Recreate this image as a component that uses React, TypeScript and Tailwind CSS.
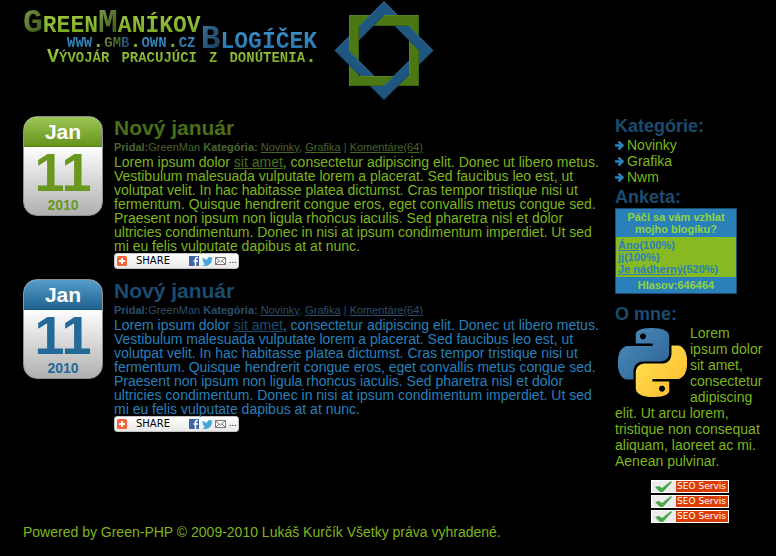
import React from "react";

type Tone = "green" | "blue";

const tones = {
  green: {
    head: "from-[#9cc653] to-[#66941c] border-[#55800f]",
    date: "text-[#6a981f]",
    title: "text-[#496f18]",
    meta: "text-[#48662a]",
    body: "text-[#7db61c]",
    link: "text-[#47701a]",
  },
  blue: {
    head: "from-[#559dcb] to-[#1f638f] border-[#17557e]",
    date: "text-[#246a98]",
    title: "text-[#1b4c70]",
    meta: "text-[#2a4f6b]",
    body: "text-[#2680bc]",
    link: "text-[#1b4c70]",
  },
};

const limeText = "bg-linear-to-b from-[#a0cf42] to-[#74a01f] bg-clip-text text-transparent";
const mossText = "bg-linear-to-br from-[#7d9a4a] to-[#33500f] bg-clip-text text-transparent";
const skyText = "bg-linear-to-b from-[#3f95cf] to-[#2471a6] bg-clip-text text-transparent";
const navyText = "bg-linear-to-br from-[#3b6f96] to-[#123c5c] bg-clip-text text-transparent";

function StarLogo() {
  return (
    <svg viewBox="0 0 102 102" className="h-[102px] w-[102px]" aria-hidden="true">
      <defs>
        <clipPath id="weave">
          <path d="M10 22H26V51H10zM51 10H80V26H51zM76 51H92V80H76zM22 76H51V92H22z" />
        </clipPath>
        <g id="frame">
          <path fill="#4c7814" fillRule="evenodd" d="M16 15H86V86H16zM26 26V76H76V26z" />
          <path fill="none" stroke="#5f8c28" strokeOpacity=".6" d="M16.500 85V15.500H85M27 76.500H76.500V27" />
          <path fill="none" stroke="#34580c" strokeOpacity=".7" d="M85.500 16V85.500H17M25.500 76V25.500H76" />
        </g>
      </defs>
      <use href="#frame" />
      <path fill="#1f5680" fillRule="evenodd" d="M51 1L100.500 50.500L51 100L1.500 50.500zM51 15.500L16 50.500L51 85.500L86 50.500z" />
      <path fill="none" stroke="#3674a0" strokeOpacity=".6" d="M2.500 50.500L51 2L99.500 50.500M16 51.500L51 86.500L86 51.500" />
      <path fill="none" stroke="#123f60" strokeOpacity=".8" d="M3 51.500L51 99.500L99 51.500M16 50L51 15L86 50" />
      <use href="#frame" clipPath="url(#weave)" />
    </svg>
  );
}

function PythonLogo() {
  return (
    <svg viewBox="0 0 24 24" className="float-left mt-[3px] mr-[3px] ml-[3px] h-[69px] w-[69px]" aria-hidden="true">
      <defs>
        <linearGradient id="pyBlue" x1="0" y1="0" x2="1" y2="1">
          <stop offset="0" stopColor="#4a8fc2" />
          <stop offset="1" stopColor="#2e5f8c" />
        </linearGradient>
        <linearGradient id="pyGold" x1="0" y1="0" x2="1" y2="1">
          <stop offset="0" stopColor="#ffe65a" />
          <stop offset="1" stopColor="#fcb827" />
        </linearGradient>
      </defs>
      <path
        fill="url(#pyBlue)"
        d="M14.25.18l.9.2.73.26.59.3.45.32.34.34.25.34.16.33.1.3.04.26.02.2-.01.13V8.5l-.05.63-.13.55-.21.46-.26.38-.3.31-.33.25-.35.19-.35.14-.33.1-.3.07-.26.04-.21.02H8.77l-.69.05-.59.14-.5.22-.41.27-.33.32-.27.35-.2.36-.15.37-.1.35-.07.32-.04.27-.02.21v3.06H3.17l-.21-.03-.28-.07-.32-.12-.35-.18-.36-.26-.36-.36-.35-.46-.32-.59-.28-.73-.21-.88-.14-1.05-.05-1.23.06-1.22.16-1.04.24-.87.32-.71.36-.57.4-.44.42-.33.42-.24.4-.16.36-.1.32-.05.24-.01h.16l.06.01h8.16v-.83H6.18l-.01-2.75-.02-.37.05-.34.11-.31.17-.28.25-.26.31-.23.38-.2.44-.18.51-.15.58-.12.64-.1.71-.06.77-.04.84-.02 1.27.05zm-6.3 1.98l-.23.33-.08.41.08.41.23.34.33.22.41.09.41-.09.33-.22.23-.34.08-.41-.08-.41-.23-.33-.33-.22-.41-.09-.41.09z"
      />
      <path
        fill="url(#pyGold)"
        d="M21.04 6.11l.28.06.32.12.35.18.36.27.36.35.35.47.32.59.28.73.21.88.14 1.04.05 1.23-.06 1.23-.16 1.04-.24.86-.32.71-.36.57-.4.45-.42.33-.42.24-.4.16-.36.09-.32.05-.24.02-.16-.01h-8.22v.82h5.84l.01 2.76.02.36-.05.34-.11.31-.17.29-.25.25-.31.24-.38.2-.44.17-.51.15-.58.13-.64.09-.71.07-.77.04-.84.01-1.27-.04-1.07-.14-.9-.2-.73-.25-.59-.3-.45-.33-.34-.34-.25-.34-.16-.33-.1-.3-.04-.25-.02-.2.01-.13v-5.34l.05-.64.13-.54.21-.46.26-.38.3-.32.33-.24.35-.2.35-.14.33-.1.3-.06.26-.04.21-.02.13-.01h5.84l.69-.05.59-.14.5-.21.41-.28.33-.32.27-.35.2-.36.15-.36.1-.35.07-.32.04-.28.02-.21V6.07h2.09l.14.01zm-6.47 14.25l-.23.33-.08.41.08.41.23.33.33.23.41.08.41-.08.33-.23.23-.33.08-.41-.08-.41-.23-.33-.33-.23-.41-.08-.41.08z"
      />
    </svg>
  );
}

function ShareButton() {
  return (
    <button
      type="button"
      className="flex h-4 w-[125px] items-center rounded-[3px] border border-[#c4c4c4] bg-linear-to-b from-white to-[#e9e9e9] pl-[2px] text-black"
    >
      <svg viewBox="0 0 10 10" className="h-[10px] w-[10px]" aria-hidden="true">
        <rect width="10" height="10" rx="1.500" fill="#fa6236" />
        <path d="M5 2V8M2 5H8" stroke="#fff" strokeWidth="2" />
      </svg>
      <span className="ml-[9px] w-[53px] text-left font-['DejaVu_Sans'] text-[10px] leading-3">SHARE</span>
      <svg viewBox="0 0 10 10" className="h-[10px] w-[10px]" aria-hidden="true">
        <rect width="10" height="10" fill="#3f64a3" />
        <path d="M9 1.500H8Q6.500 1.500 6.500 3V10M4.500 5H9" fill="none" stroke="#fff" strokeWidth="1.500" />
      </svg>
      <svg viewBox="0 0 24 20" className="ml-[3px] h-[9px] w-[11px]" aria-hidden="true">
        <path
          fill="#43a5d9"
          d="M24 2.400a10 10 0 0 1-2.800.8A5 5 0 0 0 23.300.500a10 10 0 0 1-3.100 1.200A4.900 4.900 0 0 0 11.800 6.200 14 14 0 0 1 1.700 1a4.900 4.900 0 0 0 1.500 6.600A5 5 0 0 1 1 7a4.900 4.900 0 0 0 3.900 4.900 5 5 0 0 1-2.200.1 4.900 4.900 0 0 0 4.600 3.400A10 10 0 0 1 0 17.500a14 14 0 0 0 21.500-12.400A10 10 0 0 0 24 2.400z"
        />
      </svg>
      <svg viewBox="0 0 11 8" className="ml-[2px] h-2 w-[11px]" aria-hidden="true">
        <path d="M.5.5H10.500V7.500H.5zL5.500 5L10.500.5M.5 7.500L4 4M10.500 7.500L7 4" fill="#fff" stroke="#777" />
      </svg>
      <span className="ml-[3px] font-['DejaVu_Sans'] text-[8px] leading-3">...</span>
    </button>
  );
}

function Post({ tone }: { tone: Tone }) {
  const t = tones[tone];
  return (
    <article className="flex items-start gap-[11px]">
      <time
        dateTime="2010-01-11"
        className={`flex h-[100px] w-20 shrink-0 flex-col overflow-hidden rounded-[14px] border border-[#8f8f8f] bg-linear-to-b from-white from-30% to-[#b0b0b0] text-center font-bold ${t.date}`}
      >
        <span className={`h-[30px] shrink-0 border-b bg-linear-to-b text-[21px] leading-[29px] text-white ${t.head}`}>Jan</span>
        <span className="h-[49px] shrink-0 text-[54px] leading-[50px]">11</span>
        <span className="text-sm leading-[18px]">2010</span>
      </time>
      <div className="min-w-0 flex-1">
        <h2 className={`text-[21px] leading-[23px] font-bold ${t.title}`}>Nový január</h2>
        <p className={`text-[11px] leading-4 ${t.meta}`}>
          <b>Pridal:</b>GreenMan <b>Kategória:</b> <a href="#novinky" className="underline">Novinky</a>,{" "}
          <a href="#grafika" className="underline">Grafika</a> | <a href="#komentare" className="underline">Komentáre(64)</a>
        </p>
        <p className={`pr-2 text-sm leading-[14px] ${t.body}`}>
          Lorem ipsum dolor <a href="#sit" className={`underline ${t.link}`}>sit amet</a>, consectetur adipiscing elit. Donec ut
          libero metus. Vestibulum malesuada vulputate lorem a placerat. Sed faucibus leo est, ut volutpat velit. In hac
          habitasse platea dictumst. Cras tempor tristique nisi ut fermentum. Quisque hendrerit congue eros, eget convallis
          metus congue sed. Praesent non ipsum non ligula rhoncus iaculis. Sed pharetra nisl et dolor ultricies
          condimentum. Donec in nisi at ipsum condimentum imperdiet. Ut sed mi eu felis vulputate dapibus at at nunc.
        </p>
        <ShareButton />
      </div>
    </article>
  );
}

function Category({ name }: { name: string }) {
  return (
    <li className="flex items-center gap-[3px]">
      <svg viewBox="0 0 9 9" className="h-[9px] w-[9px]" aria-hidden="true">
        <path d="M0 4.500H7M3.500.5L7.500 4.500L3.500 8.500" fill="none" stroke="#2b80b9" strokeWidth="2.600" />
      </svg>
      <a href={`#${name}`}>{name}</a>
    </li>
  );
}

function SeoBadge() {
  return (
    <a href="#seo" className="flex h-[13px] w-[78px] border border-white bg-[#ececec]">
      <svg viewBox="0 0 24 11" className="h-[11px] w-6" aria-hidden="true">
        <path d="M3 6L7 5L10 7L19 0L20 1L11 11H8z" fill="#4aa84a" />
      </svg>
      <span className="flex-1 bg-[#dc3c04] text-center font-['DejaVu_Sans'] text-[9px] leading-[11px] whitespace-nowrap text-white">
        SEO Servis
      </span>
    </a>
  );
}

function Poll() {
  const answers = [
    ["Áno", "100"],
    ["jj", "100"],
    ["Je nádherný", "520"],
  ];
  return (
    <div className="w-[122px] border border-[#1b4c70] bg-[#2a80b9] text-[11px] leading-3 font-bold text-[#8fd43f]">
      <p className="px-2 py-[2px] text-center">Páči sa vám vzhlat mojho blogíku?</p>
      <ul className="bg-[#86b922] px-[2px] py-[2px] text-[#2a80b9]">
        {answers.map(([label, share]) => (
          <li key={label}>
            <a href="#anketa" className="underline">{label}</a>({share}%)
          </li>
        ))}
      </ul>
      <p className="py-[2px] text-center">Hlasov:646464</p>
    </div>
  );
}

export default function App() {
  const heading = "text-lg leading-5 font-bold text-[#1b4c70]";
  return (
    <div className="min-h-screen bg-black pr-2 pl-[23px] font-['Liberation_Sans',Arial,sans-serif] text-sm text-[#7db61c]">
      <header className="flex h-[116px] items-start">
        <h1 className="w-[310px] pt-[10px] font-['Liberation_Mono','Courier_New',monospace] font-bold whitespace-nowrap [font-variant-caps:small-caps]">
          <span className="flex items-start text-[33px] leading-7">
            <span className={mossText}>G</span>
            <span className={limeText}>reen</span>
            <span className={mossText}>M</span>
            <span className={limeText}>aníkov</span>
            <span className={`mt-4 ${navyText}`}>B</span>
            <span className={`mt-4 ${skyText}`}>logíček</span>
          </span>
          <span className="-mt-5 flex pl-11 text-xl leading-4">
            <span className={skyText}>www</span>
            <span className={limeText}>.</span>
            <span className={mossText}>gm</span>
            <span className={navyText}>b</span>
            <span className={limeText}>.</span>
            <span className={skyText}>own</span>
            <span className={limeText}>.</span>
            <span className={skyText}>cz</span>
          </span>
          <span className={`-mt-px block pl-6 text-xl leading-4 ${limeText}`}>Vývojár pracujúci z donútenia.</span>
        </h1>
        <StarLogo />
      </header>

      <div className="flex gap-1">
        <main className="flex min-w-0 flex-1 flex-col gap-[10px]">
          <Post tone="green" />
          <Post tone="blue" />
        </main>

        <aside className="w-[153px] shrink-0 leading-4">
          <h2 className={heading}>Kategórie:</h2>
          <ul className="pt-px">
            <Category name="Novinky" />
            <Category name="Grafika" />
            <Category name="Nwm" />
          </ul>
          <h2 className={`mt-[2px] mb-px ${heading}`}>Anketa:</h2>
          <Poll />
          <h2 className={`mt-[10px] mb-px ${heading}`}>O mne:</h2>
          <p>
            <PythonLogo />
            Lorem ipsum dolor sit amet, consectetur adipiscing elit. Ut arcu lorem, tristique non consequat aliquam, laoreet ac
            mi. Aenean pulvinar.
          </p>
          <div className="mt-[11px] flex flex-col items-center gap-[2px] pr-1">
            <SeoBadge />
            <SeoBadge />
            <SeoBadge />
          </div>
        </aside>
      </div>

      <footer className="pt-px leading-4">Powered by Green-PHP © 2009-2010 Lukáš Kurčík Všetky práva vyhradené.</footer>
    </div>
  );
}
